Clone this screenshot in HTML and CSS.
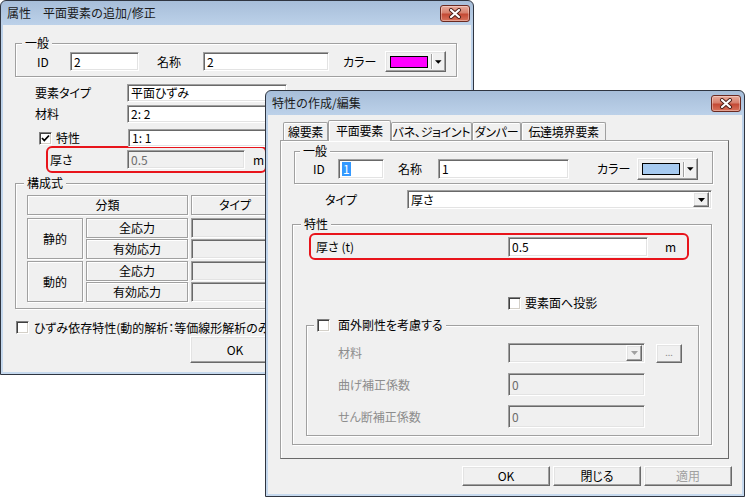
FILE: index.html
```html
<!DOCTYPE html>
<html lang="ja">
<head>
  <meta charset="UTF-8" />
  <title>属性 - 特性の作成/編集</title>
  <link rel="stylesheet" href="styles.css">
</head>
<body>
  <!-- back window -->
  <div class="window win-attr">
    <div class="titlebar">
      <span class="title">属性　平面要素の追加/修正</span>
      <span class="close-btn">
        <svg width="14" height="11" viewBox="0 0 14 11"><path d="M3 2 L11 9 M11 2 L3 9" stroke="#4a1d16" stroke-width="4" stroke-linecap="round"/><path d="M3 2 L11 9 M11 2 L3 9" stroke="#fff" stroke-width="2.2" stroke-linecap="round"/></svg>
      </span>
    </div>
    <div class="client">
      <div class="group general-a">
        <span class="group-title">一般</span>
        <div class="group-row">
          <span class="lbl id-a">ID</span>
          <span class="edit id-edit-a">2</span>
          <span class="lbl name-a">名称</span>
          <span class="edit name-edit-a">2</span>
          <span class="lbl color-a">カラー</span>
          <span class="btn color-btn">
            <span class="swatch magenta"></span>
            <span class="sep"></span>
            <svg class="arrow" width="7" height="4" viewBox="0 0 7 4"><polygon points="0,0 7,0 3.5,4" fill="#000"/></svg>
          </span>
        </div>
      </div>

      <div class="attr-row first">
        <span class="lbl attr-lbl">要素タイプ</span>
        <span class="edit attr-edit">平面ひずみ</span>
      </div>
      <div class="attr-row">
        <span class="lbl attr-lbl">材料</span>
        <span class="edit attr-edit">2: 2</span>
      </div>
      <div class="attr-row check">
        <span class="attr-check">
          <span class="checkbox"><svg width="11" height="11" viewBox="0 0 11 11"><path d="M2 5 L4.3 7.5 L9 2.5" stroke="#000" stroke-width="1.8" fill="none"/></svg></span>
          <span>特性</span>
        </span>
        <span class="edit attr-edit">1: 1</span>
      </div>
      <div class="highlight hl-a">
        <span class="lbl thick-a">厚さ</span>
        <span class="edit disabled thick-edit-a">0.5</span>
        <span class="unit-a">m</span>
      </div>

      <div class="group group-law">
        <span class="group-title law-title">構成式</span>
        <div class="law-table">
          <div class="cell head-class">分類</div>
          <div class="cell head-type">タイプ</div>
          <div class="cell cat cat-static">静的</div>
          <div class="cell sub r1">全応力</div>
          <div class="edit disabled type-cell r1"></div>
          <div class="cell sub r2">有効応力</div>
          <div class="edit disabled type-cell r2"></div>
          <div class="cell cat cat-dynamic">動的</div>
          <div class="cell sub r3">全応力</div>
          <div class="edit disabled type-cell r3"></div>
          <div class="cell sub r4">有効応力</div>
          <div class="edit disabled type-cell r4"></div>
        </div>
      </div>

      <div class="check-line">
        <span class="checkbox"></span>
        <span class="check-text">ひずみ依存特性(動的解析：等価線形解析のみ)</span>
      </div>
      <div class="btn ok-a">OK</div>
    </div>
  </div>

  <!-- front window -->
  <div class="window win-prop">
    <div class="titlebar">
      <span class="title">特性の作成/編集</span>
      <span class="close-btn">
        <svg width="14" height="11" viewBox="0 0 14 11"><path d="M3 2 L11 9 M11 2 L3 9" stroke="#4a1d16" stroke-width="4" stroke-linecap="round"/><path d="M3 2 L11 9 M11 2 L3 9" stroke="#fff" stroke-width="2.2" stroke-linecap="round"/></svg>
      </span>
    </div>
    <div class="client">
      <div class="tabs">
        <span class="tab tab-line">線要素</span>
        <span class="tab tab-plane active">平面要素</span>
        <span class="tab tab-spring">バネ、ジョイント</span>
        <span class="tab tab-damper">ダンパー</span>
        <span class="tab tab-bound">伝達境界要素</span>
      </div>
      <div class="tab-panel">
        <div class="group general-b">
          <span class="group-title general-b-title">一般</span>
          <div class="group-row">
            <span class="lbl id-b">ID</span>
            <span class="edit id-edit-b"><span class="sel">1</span></span>
            <span class="lbl name-b">名称</span>
            <span class="edit name-edit-b">1</span>
            <span class="lbl color-b">カラー</span>
            <span class="btn color-btn color-btn-b">
              <span class="swatch skyblue"></span>
              <span class="sep"></span>
              <svg class="arrow" width="7" height="4" viewBox="0 0 7 4"><polygon points="0,0 7,0 3.5,4" fill="#000"/></svg>
            </span>
          </div>
        </div>

        <div class="type-row">
          <span class="lbl type-lbl">タイプ</span>
          <span class="edit combo type-combo">
            <span class="combo-text">厚さ</span>
            <span class="btn drop-btn"><svg width="7" height="4" viewBox="0 0 7 4"><polygon points="0,0 7,0 3.5,4" fill="#000"/></svg></span>
          </span>
        </div>

        <div class="group group-props">
          <span class="group-title props-title">特性</span>
          <div class="highlight hl-b">
            <span class="lbl thick-b">厚さ (t)</span>
            <span class="edit thick-edit-b">0.5</span>
            <span class="unit-b">m</span>
          </div>
          <div class="project-row">
            <span class="checkbox"></span>
            <span class="project-text">要素面へ投影</span>
          </div>
          <div class="group group-stiff">
            <span class="group-title stiff-title">
              <span class="checkbox"></span>
              <span class="stiff-text">面外剛性を考慮する</span>
            </span>
            <div class="stiff-row first">
              <span class="lbl stiff-lbl">材料</span>
              <span class="edit disabled combo stiff-edit">
                <span class="combo-text"></span>
                <span class="btn drop-btn"><svg width="7" height="4" viewBox="0 0 7 4"><polygon points="0,0 7,0 3.5,4" fill="#a0a0a0"/></svg></span>
              </span>
              <span class="btn dots-btn">...</span>
            </div>
            <div class="stiff-row second">
              <span class="lbl stiff-lbl">曲げ補正係数</span>
              <span class="edit disabled stiff-edit tall">0</span>
            </div>
            <div class="stiff-row third">
              <span class="lbl stiff-lbl">せん断補正係数</span>
              <span class="edit disabled stiff-edit tall">0</span>
            </div>
          </div>
        </div>
      </div>
      <div class="dialog-buttons">
        <span class="btn dlg-btn">OK</span>
        <span class="btn dlg-btn">閉じる</span>
        <span class="btn dlg-btn off">適用</span>
      </div>
    </div>
  </div>
</body>
</html>
```

FILE: styles.css
```css
* {
  box-sizing: border-box;
}
html, body {
  margin: 0;
  padding: 0;
}
body {
  position: relative;
  width: 745px;
  height: 497px;
  overflow: hidden;
  background: #fff;
  font-family: "Noto Sans CJK JP", "Liberation Sans", sans-serif;
  font-size: 12px;
  line-height: 14px;
  font-feature-settings: "palt";
  color: #000;
}

/* window chrome */
.window {
  position: absolute;
  display: flex;
  flex-direction: column;
  border: 1px solid #2f3540;
  border-radius: 6px 6px 0 0;
  padding: 0 2px 2px 2px;
  background: linear-gradient(#a7bed9, #bcd1e9 24px, #c6d9ee);
}
.win-attr {
  left: 0;
  top: 0;
  width: 474px;
  height: 375px;
}
.win-prop {
  left: 265px;
  top: 90px;
  width: 480px;
  height: 407px;
}
.titlebar {
  flex: none;
  height: 24px;
  display: flex;
  align-items: center;
  justify-content: space-between;
  padding: 0 1px 0 4px;
}
.title {
  color: #1a1a1a;
  font-feature-settings: normal;
}
.close-btn {
  width: 30px;
  height: 17px;
  display: flex;
  align-items: center;
  justify-content: center;
  border: 1px solid #6b2a21;
  border-radius: 3px;
  background: linear-gradient(#e9ab9b, #d7806d 45%, #c44a35 55%, #d8735c);
  box-shadow: inset 0 0 0 1px rgba(255,255,255,0.35);
}
.client {
  flex: 1;
  background: #f0f0f0;
}

/* common controls */
.lbl {
  flex: none;
  white-space: nowrap;
}
.edit {
  flex: none;
  display: flex;
  align-items: center;
  padding-left: 3px;
  background: #fff;
  border: 1px solid;
  border-color: #a0a0a0 #fff #fff #a0a0a0;
  box-shadow: inset 1px 1px 0 #696969, inset -1px -1px 0 #e3e3e3;
  white-space: nowrap;
  overflow: hidden;
}
.edit.disabled {
  background: #f0f0f0;
  color: #6d6d6d;
}
.btn {
  display: flex;
  align-items: center;
  justify-content: center;
  background: #f0f0f0;
  border: 1px solid;
  border-color: #fff #696969 #696969 #fff;
  box-shadow: inset -1px -1px 0 #a0a0a0, inset 1px 1px 0 #e3e3e3;
}
.checkbox {
  flex: none;
  width: 13px;
  height: 13px;
  display: flex;
  align-items: center;
  justify-content: center;
  background: #fff;
  border: 1px solid;
  border-color: #808080 #fff #fff #808080;
  box-shadow: inset 1px 1px 0 #404040, inset -1px -1px 0 #d4d0c8;
}
.group {
  position: relative;
  border: 1px solid #a0a0a0;
  box-shadow: 1px 1px 0 #fff, inset 1px 1px 0 #fff;
}
.group-title {
  position: absolute;
  top: -8px;
  left: 6px;
  padding: 0 3px;
  background: #f0f0f0;
  display: flex;
  align-items: center;
}
.group-row {
  display: flex;
  align-items: center;
}
.highlight {
  display: flex;
  align-items: center;
  height: 27px;
  border: 2px solid #e8141b;
  border-radius: 6px;
}
.color-btn {
  justify-content: flex-start;
  padding: 0 3px 0 4px;
}
.swatch {
  width: 41px;
  height: 12px;
  border: 1px solid #000;
}
.magenta {
  background: #ff00ff;
}
.skyblue {
  background: #a6caf0;
}
.sep {
  width: 2px;
  height: 15px;
  margin: 0 2px 0 3px;
  border-left: 1px solid #a0a0a0;
  border-right: 1px solid #fff;
}
.combo {
  padding-right: 2px;
}
.combo-text {
  flex: 1;
}
.drop-btn {
  width: 16px;
  height: calc(100% - 2px);
}

/* back window */
.general-a {
  width: 442px;
  height: 34px;
  margin: 18px 0 0 12px;
}
.general-a .group-row {
  padding: 7px 0 0 21px;
}
.id-a { width: 33px; }
.id-edit-a { width: 69px; height: 19px; }
.name-a { width: 46px; margin-left: 18px; }
.name-edit-a { width: 126px; height: 19px; }
.color-a { width: 42px; margin-left: 14px; }
.color-btn { width: 61px; height: 21px; }

.attr-row {
  display: flex;
  align-items: center;
  height: 18px;
  margin: 3px 0 0 32px;
}
.attr-row.first {
  margin-top: 7px;
}
.attr-row.check {
  margin: 6px 0 0 36px;
}
.attr-lbl {
  width: 92px;
}
.attr-check {
  width: 89px;
  display: flex;
  align-items: center;
  gap: 4px;
}
.attr-edit {
  width: 160px;
  height: 18px;
}
.hl-a {
  width: 221px;
  margin: -1px 0 0 43px;
  padding-left: 2px;
}
.thick-a { width: 77px; }
.thick-edit-a { width: 118px; height: 19px; }
.unit-a { margin-left: 8px; }

.group-law {
  width: 442px;
  height: 126px;
  margin: 10px 0 0 12px;
}
.law-title {
  left: 8px;
}
.law-table {
  display: grid;
  grid-template-columns: 56px 102px 88px;
  grid-template-rows: 20px 3px 20px 1px 20px 2px 20px 1px 20px;
  column-gap: 3px;
  margin: 11px 0 0 11px;
}
.cell {
  display: flex;
  align-items: center;
  justify-content: center;
  border: 1px solid #a0a0a0;
  box-shadow: inset 1px 1px 0 #fff, 1px 1px 0 #fff;
}
.head-class { grid-column: 1 / 3; grid-row: 1; }
.head-type { grid-column: 3; grid-row: 1; }
.cat-static { grid-column: 1; grid-row: 3 / 6; }
.cat-dynamic { grid-column: 1; grid-row: 7 / 10; }
.sub { grid-column: 2; }
.type-cell { grid-column: 3; }
.r1 { grid-row: 3; }
.r2 { grid-row: 5; }
.r3 { grid-row: 7; }
.r4 { grid-row: 9; }

.check-line {
  display: flex;
  align-items: center;
  height: 13px;
  margin: 12px 0 0 13px;
  white-space: nowrap;
}
.check-text {
  margin-left: 5px;
}
.ok-a {
  width: 90px;
  height: 27px;
  margin: 2px 0 0 187px;
}

/* front window */
.tabs {
  position: relative;
  z-index: 2;
  display: flex;
  align-items: flex-end;
  height: 20px;
  margin: 5px 0 0 15px;
}
.tab {
  height: 18px;
  display: flex;
  align-items: center;
  justify-content: center;
  background: #f0f0f0;
  border: 1px solid #a0a0a0;
  border-bottom: none;
  border-radius: 2px 2px 0 0;
  box-shadow: inset 1px 1px 0 #fff;
  white-space: nowrap;
  letter-spacing: -0.3px;
}
.tab.active {
  height: 21px;
  margin-bottom: -1px;
}
.tab-line { width: 45px; }
.tab-plane { width: 63px; }
.tab-spring { width: 81px; }
.tab-damper { width: 49px; }
.tab-bound { width: 85px; }
.tab-panel {
  position: relative;
  z-index: 1;
  width: 449px;
  height: 319px;
  margin-left: 12px;
  border: 1px solid;
  border-color: #a0a0a0 #696969 #696969 #a0a0a0;
  box-shadow: inset 1px 1px 0 #fff;
}
.general-b {
  width: 419px;
  height: 33px;
  margin: 10px 0 0 13px;
}
.general-b-title {
  left: 5px;
}
.general-b .group-row {
  padding: 6px 0 0 18px;
}
.id-b { width: 25px; }
.id-edit-b { width: 46px; height: 20px; }
.sel {
  background: #3399ff;
  color: #fff;
  padding: 0 1px;
}
.name-b { width: 40px; margin-left: 14px; }
.name-edit-b { width: 131px; height: 20px; }
.color-b { width: 40px; margin-left: 28px; }
.color-btn-b { height: 22px; }

.type-row {
  display: flex;
  align-items: center;
  margin: 6px 0 0 44px;
}
.type-lbl { width: 82px; }
.type-combo { width: 305px; height: 19px; }

.group-props {
  width: 420px;
  height: 221px;
  margin: 15px 0 0 11px;
}
.props-title {
  left: 8px;
}
.hl-b {
  width: 380px;
  margin: 8px 0 0 16px;
  padding-left: 5px;
}
.thick-b { width: 192px; }
.thick-edit-b { width: 140px; height: 20px; }
.unit-b { margin-left: 17px; }
.project-row {
  display: flex;
  align-items: center;
  margin: 36px 0 0 215px;
}
.project-text {
  margin-left: 4px;
}
.group-stiff {
  width: 393px;
  height: 111px;
  margin: 15px 0 0 13px;
}
.stiff-title {
  left: 7px;
}
.stiff-text {
  margin-left: 8px;
}
.stiff-row {
  display: flex;
  align-items: center;
  padding-left: 31px;
}
.stiff-row.first { margin-top: 17px; }
.stiff-row.second { margin-top: 10px; }
.stiff-row.third { margin-top: 9px; }
.stiff-lbl {
  width: 170px;
  color: #8d8d8d;
}
.stiff-edit {
  width: 137px;
  height: 20px;
}
.stiff-edit.tall {
  height: 23px;
}
.dots-btn {
  width: 26px;
  height: 19px;
  margin-left: 11px;
  font-size: 9px;
  color: #8d8d8d;
}
.dialog-buttons {
  display: flex;
  justify-content: flex-end;
  gap: 3px;
  margin: 7px 10px 0 0;
}
.dlg-btn {
  width: 88px;
  height: 20px;
}
.dlg-btn.off {
  color: #a0a0a0;
}
```
